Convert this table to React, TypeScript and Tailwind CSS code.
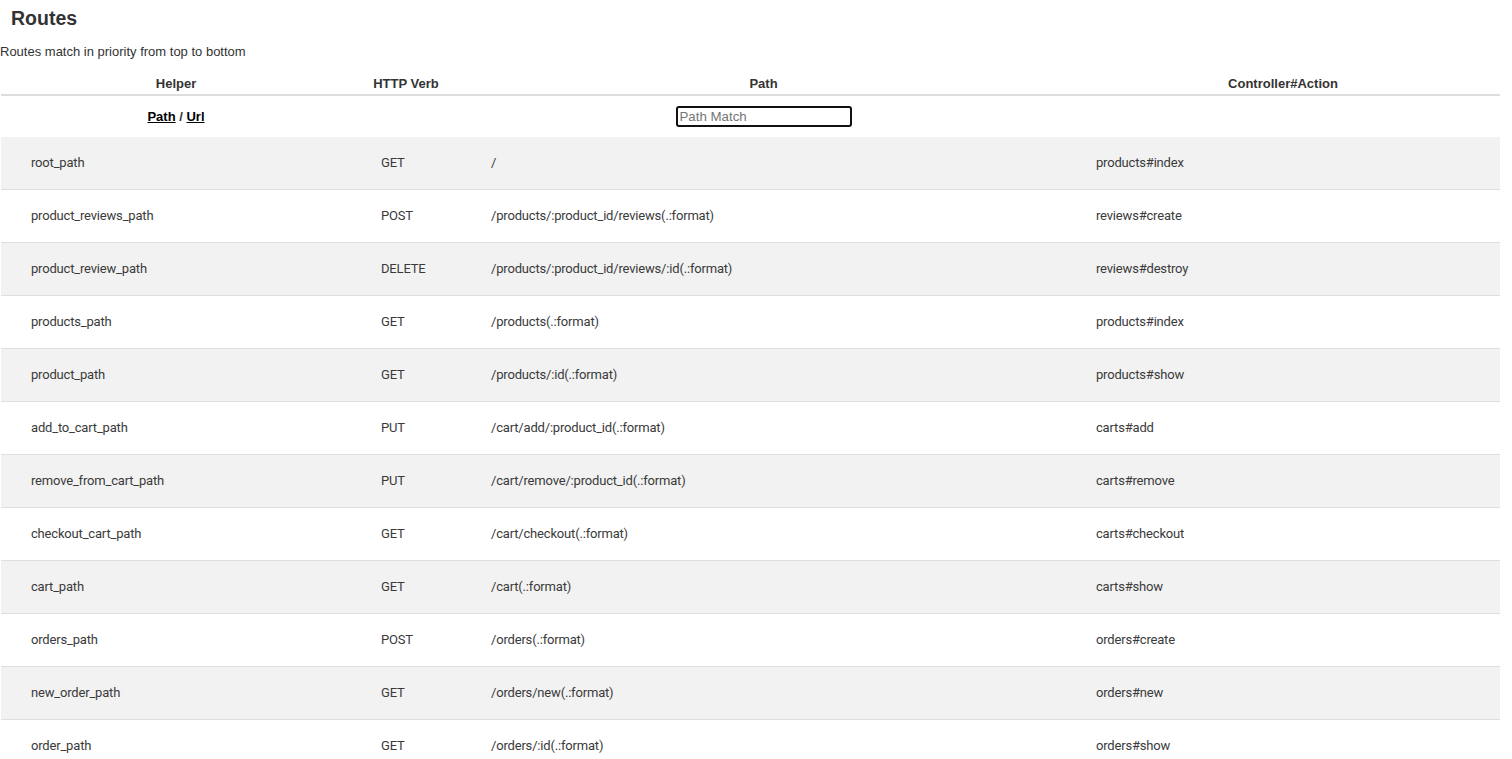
const routes = [
  ["root_path", "GET", "/", "products#index"],
  ["product_reviews_path", "POST", "/products/:product_id/reviews(.:format)", "reviews#create"],
  ["product_review_path", "DELETE", "/products/:product_id/reviews/:id(.:format)", "reviews#destroy"],
  ["products_path", "GET", "/products(.:format)", "products#index"],
  ["product_path", "GET", "/products/:id(.:format)", "products#show"],
  ["add_to_cart_path", "PUT", "/cart/add/:product_id(.:format)", "carts#add"],
  ["remove_from_cart_path", "PUT", "/cart/remove/:product_id(.:format)", "carts#remove"],
  ["checkout_cart_path", "GET", "/cart/checkout(.:format)", "carts#checkout"],
  ["cart_path", "GET", "/cart(.:format)", "carts#show"],
  ["orders_path", "POST", "/orders(.:format)", "orders#create"],
  ["new_order_path", "GET", "/orders/new(.:format)", "orders#new"],
  ["order_path", "GET", "/orders/:id(.:format)", "orders#show"],
];

const cols = "grid grid-cols-[350px_110px_605px_434px]";

export default function App() {
  return (
    <div className="min-h-screen bg-white text-[#333] font-['Liberation_Sans',Arial,sans-serif]">
      <h2 className="pt-[6px] pl-[11px] text-[19.5px] leading-[24px] font-bold">Routes</h2>
      <p className="mt-[13px] text-[13px] leading-[18px]">Routes match in priority from top to bottom</p>

      <div className="mt-[11px] ml-[1px] w-[1499px]">
        {/* header */}
        <div className={`${cols} border-b-2 border-[#ddd] text-[13px] leading-[18px] font-bold pt-[3px] pb-[1px]`}>
          <div className="text-center">Helper</div>
          <div className="text-center">HTTP Verb</div>
          <div className="text-center">Path</div>
          <div className="text-center">Controller#Action</div>
        </div>

        {/* search row */}
        <div className={`${cols} h-[41px] items-center text-[13px]`}>
          <div className="text-center font-bold">
            <a className="underline text-black">Path</a> / <a className="underline text-black">Url</a>
          </div>
          <div />
          <div className="flex justify-center">
            <input
              placeholder="Path Match"
              className="w-[176px] h-[21px] px-[2px] border-2 border-[#111] rounded-[3px] text-[13.3px] placeholder:text-[#757575] outline-none"
            />
          </div>
          <div />
        </div>

        {routes.map(([helper, verb, path, action], i) => (
          <div
            key={helper}
            className={`${cols} h-[53px] items-center border-b border-[#dfdfdf] text-[13px] tracking-[-0.18px] font-['Roboto',sans-serif] text-[#3a3a3a] ${
              i % 2 === 0 ? "bg-[#f2f2f2]" : "bg-white"
            }`}
          >
            <div className="px-[30px]">{helper}</div>
            <div className="px-[30px]">{verb}</div>
            <div className="px-[30px]">{path}</div>
            <div className="px-[30px]">{action}</div>
          </div>
        ))}
      </div>
    </div>
  );
}
